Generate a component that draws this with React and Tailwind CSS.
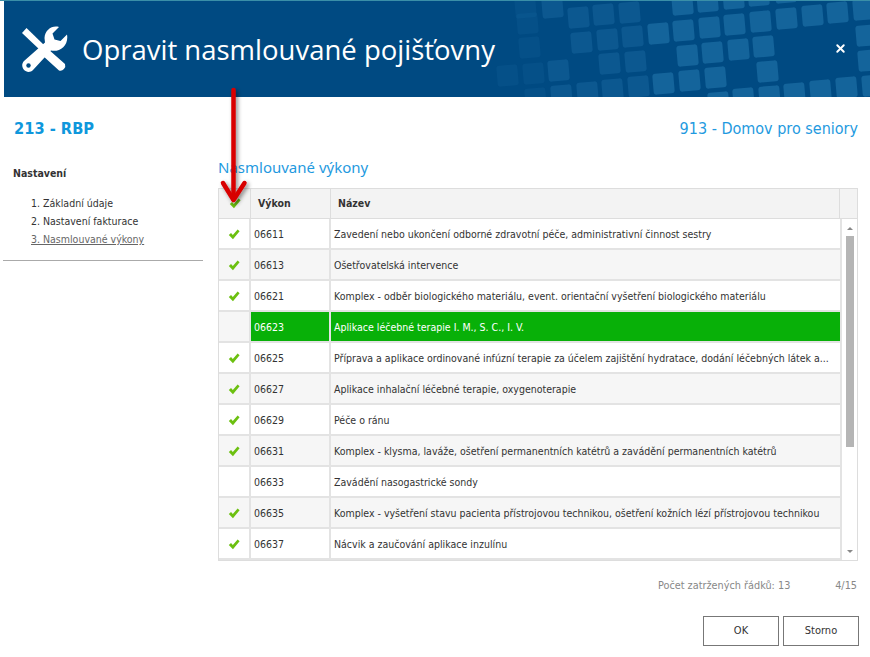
import React from 'react'
import { X } from 'lucide-react'

const rows = [
  { code: '06611', name: 'Zavedení nebo ukončení odborné zdravotní péče, administrativní činnost sestry', on: true },
  { code: '06613', name: 'Ošetřovatelská intervence', on: true },
  { code: '06621', name: 'Komplex - odběr biologického materiálu, event. orientační vyšetření biologického materiálu', on: true },
  { code: '06623', name: 'Aplikace léčebné terapie I. M., S. C., I. V.', on: false, active: true },
  { code: '06625', name: 'Příprava a aplikace ordinované infúzní terapie za účelem zajištění hydratace, dodání léčebných látek a...', on: true },
  { code: '06627', name: 'Aplikace inhalační léčebné terapie, oxygenoterapie', on: true },
  { code: '06629', name: 'Péče o ránu', on: true },
  { code: '06631', name: 'Komplex - klysma, laváže, ošetření permanentních katétrů a zavádění permanentních katétrů', on: true },
  { code: '06633', name: 'Zavádění nasogastrické sondy', on: false },
  { code: '06635', name: 'Komplex - vyšetření stavu pacienta přístrojovou technikou, ošetření kožních lézí přístrojovou technikou', on: true },
  { code: '06637', name: 'Nácvik a zaučování aplikace inzulínu', on: true },
]

// background tiles, page coordinates read off the reference
const tiles = [
  [672, -6], [697, -9], [723, -12], [748, -15], [775, -18],
  [568, 7], [593, 4], [619, 2],
  [571, 32], [597, 29], [622, 26], [648, 23], [673, 20], [699, 17], [724, 14], [750, 11], [776, 8], [802, 5], [827, 2], [853, -1],
  [677, 45], [702, 42], [728, 39], [753, 36], [856, 25], [858, 50],
  [599, 53], [625, 51], [523, 63], [548, 60], [757, 61],
  [679, 70], [705, 67], [653, 73], [628, 76], [602, 79], [577, 82], [551, 85], [525, 88],
  [862, 75], [836, 77], [810, 80], [784, 83], [759, 86], [733, 88], [708, 92],
  [517, 13], [519, 37], [497, 65], [515, -3], [542, -3],
]

const tileOpacity = (x) => (x < 540 ? 0.25 : x < 640 ? 0.55 : 0.95)

const Check = () => (
  <svg width="12" height="11" viewBox="0 0 15 13" preserveAspectRatio="none">
    <path d="M1 7 L3.800 4.800 L6 7 L12 0.500 L14.500 2.800 L6.200 12 Z" fill="#6cc010" />
  </svg>
)

const App = () => {
  return (
    <div className="w-[870px] h-[657px] overflow-hidden bg-white text-[#333] text-[10.5px] font-['DejaVu_Sans_Condensed','DejaVu_Sans',sans-serif] [font-stretch:condensed] relative">
      <div className="h-px bg-[#3a8fa8]" />
      <div className="ml-1 h-24 bg-[#004a82] relative overflow-hidden flex items-center">
        {/* tile pattern */}
        {tiles.map(([x, y], i) => (
          <div key={i} className="absolute w-[21px] h-[21px] rounded-[3px] bg-[#15659c]" style={{ left: x - 4, top: y - 1, opacity: tileOpacity(x), transform: 'rotate(-5deg)' }} />
        ))}
        <svg className="ml-[17px] relative" width="47" height="47" viewBox="0 0 47 47">
          <path d="M1 7 L5.500 2 L24 20 L19.500 24.500 Z" fill="#fff" />
          <path d="M27 23 L44 38 a5 5 0 0 1 -6 6.500 L21 29 Z" fill="#fff" />
          <path d="M46 8.500 L39.500 15 L33.500 13.500 L31.500 7.500 L38 1 C31 -1 24 4 23.500 12 L24 16.500 L3 35 C-2.500 41 6 50 12 44 L30 24.500 C39 26.500 48 19 46 8.500 Z" fill="#fff" />
          <circle cx="7.500" cy="39.500" r="2.200" fill="#004a82" />
        </svg>
        <div className="relative ml-[14px] pt-[2px] text-[27.5px] leading-none text-white font-['Open_Sans',sans-serif] [font-stretch:normal]">Opravit nasmlouvané pojišťovny</div>
        <X className="absolute left-[830px] top-[41px] text-white" size={13} strokeWidth={3.5} />
      </div>

      <div className="flex items-center justify-between pl-[14px] pr-3 pt-[22px]">
        <div className="text-[16.3px] leading-5 font-bold text-[#0f97dc]">213 - RBP</div>
        <div className="text-[16px] leading-5 text-[#1f9ae0]">913 - Domov pro seniory</div>
      </div>

      <div className="flex pt-[20px]">
        <div className="w-[200px] ml-[3px] shrink-0">
          <div className="pl-[10px] pt-[6px] font-bold text-[#333] leading-4">Nastavení</div>
          <div className="pl-[28px] pt-[13px] leading-[18px]">
            <div>1. Základní údaje</div>
            <div>2. Nastavení fakturace</div>
            <div className="underline text-[#666]">3. Nasmlouvané výkony</div>
          </div>
          <div className="mt-[12px] border-t border-[#aaa]" />
        </div>

        <div className="ml-[15px] w-[640px]">
          <div className="-mt-[2px] text-[15px] leading-5 text-[#1f9ae0] font-['Noto_Sans',sans-serif] [font-stretch:normal]">Nasmlouvané výkony</div>
          <div className="mt-[11px] border border-[#ddd] h-[373px] overflow-hidden">
            <div className="flex h-[30px] bg-[#f3f3f3] border-b border-[#ddd] font-bold">
              <div className="w-[32px] border-r border-[#ddd] flex items-center justify-center">
                <Check />
              </div>
              <div className="w-20 border-r border-[#ddd] flex items-center pl-[7px]">Výkon</div>
              <div className="flex-1 border-r border-[#ddd] flex items-center pl-[7px]">Název</div>
              <div className="w-[17px]" />
            </div>
            <div className="flex">
              <div className="flex-1 min-w-0">
                {rows.map((r, i) => (
                  <div key={r.code} className={`flex h-[31px] border-b-2 border-[#e3e3e3] ${i % 2 === 1 ? 'bg-[#f6f6f6]' : 'bg-white'}`}>
                    <div className={`w-[32px] pt-[1px] border-r-2 border-[#e3e3e3] flex items-center justify-center ${r.active ? 'bg-[#f6f6f6]' : ''}`}>
                      {r.on && <Check />}
                    </div>
                    <div className={`w-20 pt-[2px] border-r-2 border-[#e3e3e3] flex items-center pl-[3px] ${r.active ? 'bg-[#08b008] text-white' : ''}`}>{r.code}</div>
                    <div className={`flex-1 min-w-0 pt-[2px] flex items-center pl-[3px] whitespace-nowrap overflow-hidden ${r.active ? 'bg-[#08b008] text-white' : ''}`}>{r.name}</div>
                  </div>
                ))}
              </div>
              <div className="w-[17px] border-l-2 border-[#e3e3e3] flex flex-col items-center bg-white h-[342px] shrink-0">
                <div className="mt-[8px] w-0 h-0 border-x-[3px] border-x-transparent border-b-[3px] border-b-[#888]" />
                <div className="mt-[6px] w-[8px] h-[211px] bg-[#b5b5b5]" />
                <div className="mt-auto mb-[8px] w-0 h-0 border-x-[3px] border-x-transparent border-t-[3px] border-t-[#888]" />
              </div>
            </div>
          </div>
          <div className="flex justify-between mt-[17px] text-[#888] text-[10.8px] leading-4 pr-[1px]">
            <div className="ml-[440px]">Počet zatržených řádků: 13</div>
            <div>4/15</div>
          </div>
          <div className="flex justify-end gap-[4px] mt-[22px] -mr-px text-[11px]">
            <button className="w-[76px] h-[30px] border border-[#777] text-[#333]">OK</button>
            <button className="w-[76px] h-[30px] border border-[#777] text-[#333]">Storno</button>
          </div>
        </div>
      </div>

      {/* red annotation arrow */}
      <svg className="absolute left-[215px] top-[85px] pointer-events-none" width="40" height="130" viewBox="0 0 40 130">
        <defs>
          <filter id="s" x="-50%" y="-20%" width="200%" height="140%">
            <feDropShadow dx="2" dy="2" stdDeviation="2" floodColor="#000" floodOpacity="0.45" />
          </filter>
        </defs>
        <g filter="url(#s)" stroke="#d80000" strokeWidth="4.5" fill="none" strokeLinecap="round" strokeLinejoin="round">
          <path d="M18.500 5 V114" />
          <path d="M8 98 L18.500 115 L29.500 98" />
        </g>
      </svg>
    </div>
  )
}

export default App
